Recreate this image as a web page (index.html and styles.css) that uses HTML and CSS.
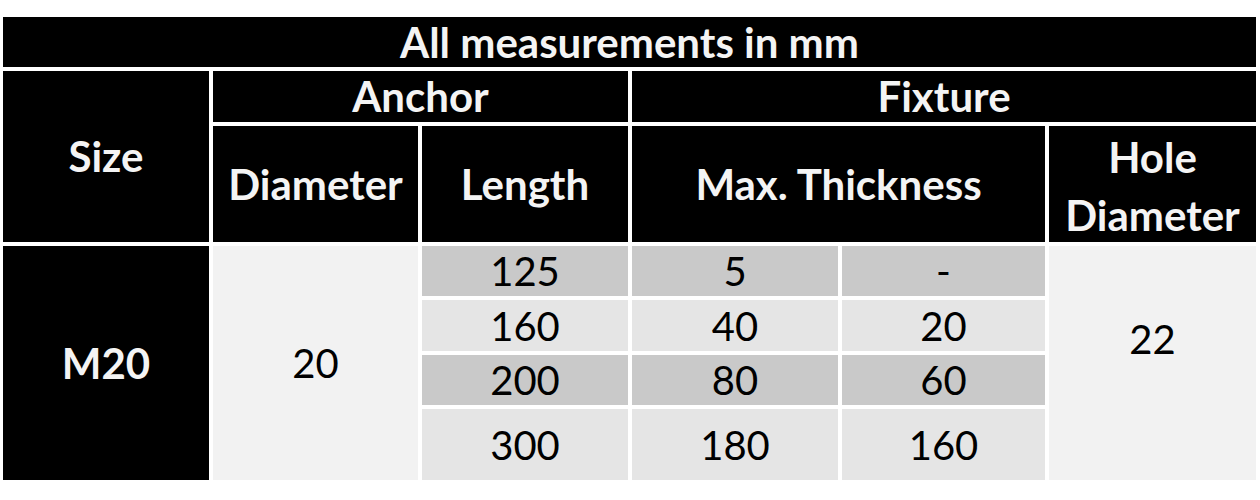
FILE: index.html
```html
<!DOCTYPE html>
<html lang="en">
<head>
<meta charset="utf-8">
<title>All measurements in mm</title>
<link rel="stylesheet" href="styles.css">
</head>
<body>
<div class="page">
  <div class="spec" role="table" aria-label="All measurements in mm">
    <div class="cell head title">All measurements in mm</div>
    <div class="cell head size">Size</div>
    <div class="cell head anchor">Anchor</div>
    <div class="cell head fixture">Fixture</div>
    <div class="cell head diam">Diameter</div>
    <div class="cell head length">Length</div>
    <div class="cell head thick">Max. Thickness</div>
    <div class="cell head hole">Hole<br>Diameter</div>

    <div class="cell head m20">M20</div>
    <div class="cell light d20">20</div>

    <div class="cell dark r1 c3">125</div>
    <div class="cell dark r1 c4">5</div>
    <div class="cell dark r1 c5">-</div>

    <div class="cell mid r2 c3">160</div>
    <div class="cell mid r2 c4">40</div>
    <div class="cell mid r2 c5">20</div>

    <div class="cell dark r3 c3">200</div>
    <div class="cell dark r3 c4">80</div>
    <div class="cell dark r3 c5">60</div>

    <div class="cell mid r4 c3">300</div>
    <div class="cell mid r4 c4">180</div>
    <div class="cell mid r4 c5">160</div>

    <div class="cell light h22">22</div>
  </div>
</div>
</body>
</html>
```

FILE: styles.css
```css
html, body {
  margin: 0;
  padding: 0;
  background: #ffffff;
}

.page {
  padding: 17px 4px 0 3px;
}

.spec {
  display: grid;
  grid-template-columns: 206px 205px 206px 206px 203px 207px;
  grid-template-rows: 50px 51px 116px 50px 51px 50px 71px;
  column-gap: 4px;
  row-gap: 4px;
  width: 1253px;
  font-family: "Lato", "Liberation Sans", sans-serif;
}

.cell {
  display: flex;
  align-items: center;
  justify-content: center;
  text-align: center;
  font-size: 40px;
  line-height: 1.4;
  color: #000000;
}

.head {
  background: #000000;
  color: #f4f4f4;
  font-weight: 700;
  font-size: 42px;
}

.dark { background: #c9c9c9; }
.mid { background: #e5e5e5; }
.light { background: #f2f2f2; }

.title { grid-column: 1 / 7; grid-row: 1; }
.size { grid-column: 1; grid-row: 2 / 4; }
.anchor { grid-column: 2 / 4; grid-row: 2; }
.fixture { grid-column: 4 / 7; grid-row: 2; }
.diam { grid-column: 2; grid-row: 3; }
.length { grid-column: 3; grid-row: 3; }
.thick { grid-column: 4 / 6; grid-row: 3; }
.hole { grid-column: 6; grid-row: 3; line-height: 58px; padding-top: 4px; }

.m20 { grid-column: 1; grid-row: 4 / 8; }
.d20 { grid-column: 2; grid-row: 4 / 8; }
.h22 { grid-column: 6; grid-row: 4 / 8; padding-bottom: 48px; }

.r1 { grid-row: 4; }
.r2 { grid-row: 5; }
.r3 { grid-row: 6; }
.r4 { grid-row: 7; }
.c3 { grid-column: 3; }
.c4 { grid-column: 4; }
.c5 { grid-column: 5; }
```
